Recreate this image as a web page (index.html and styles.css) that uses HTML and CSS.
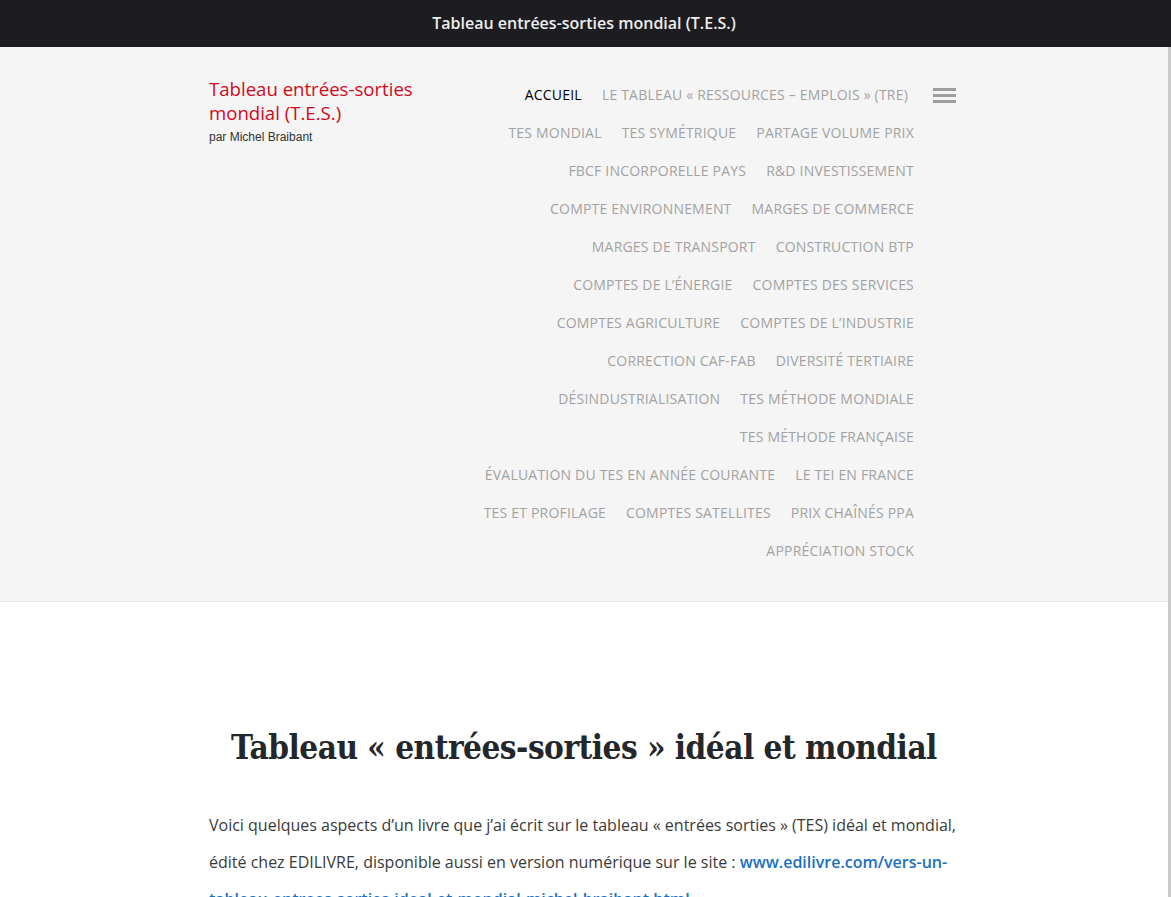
FILE: index.html
```html
<!DOCTYPE html>
<html lang="fr">
<head>
<meta charset="utf-8">
<title>Tableau entrées-sorties mondial (T.E.S.)</title>
<link rel="stylesheet" href="styles.css">
</head>
<body>
<div class="topbar">Tableau entrées-sorties mondial (T.E.S.)</div>
<div class="page">
  <header class="site-header">
    <div class="header-inner">
      <div class="branding">
        <a class="site-title" href="#">Tableau entrées-sorties mondial (T.E.S.)</a>
        <p class="site-desc">par Michel Braibant</p>
      </div>
      <nav class="main-nav">
        <ul class="menu">
          <li><a class="active" href="#">ACCUEIL</a></li>
          <li class="menu-first-end"><a href="#">LE TABLEAU « RESSOURCES – EMPLOIS » (TRE)</a></li>
          <li><a href="#">TES MONDIAL</a></li>
          <li><a href="#">TES SYMÉTRIQUE</a></li>
          <li><a href="#">PARTAGE VOLUME PRIX</a></li>
          <li><a href="#">FBCF INCORPORELLE PAYS</a></li>
          <li><a href="#">R&amp;D INVESTISSEMENT</a></li>
          <li><a href="#">COMPTE ENVIRONNEMENT</a></li>
          <li><a href="#">MARGES DE COMMERCE</a></li>
          <li><a href="#">MARGES DE TRANSPORT</a></li>
          <li><a href="#">CONSTRUCTION BTP</a></li>
          <li><a href="#">COMPTES DE L’ÉNERGIE</a></li>
          <li><a href="#">COMPTES DES SERVICES</a></li>
          <li><a href="#">COMPTES AGRICULTURE</a></li>
          <li><a href="#">COMPTES DE L’INDUSTRIE</a></li>
          <li><a href="#">CORRECTION CAF-FAB</a></li>
          <li><a href="#">DIVERSITÉ TERTIAIRE</a></li>
          <li><a href="#">DÉSINDUSTRIALISATION</a></li>
          <li><a href="#">TES MÉTHODE MONDIALE</a></li>
          <li><a href="#">TES MÉTHODE FRANÇAISE</a></li>
          <li><a href="#">ÉVALUATION DU TES EN ANNÉE COURANTE</a></li>
          <li><a href="#">LE TEI EN FRANCE</a></li>
          <li><a href="#">TES ET PROFILAGE</a></li>
          <li><a href="#">COMPTES SATELLITES</a></li>
          <li><a href="#">PRIX CHAÎNÉS PPA</a></li>
          <li><a href="#">APPRÉCIATION STOCK</a></li>
        </ul>
      </nav>
      <button class="menu-toggle" aria-label="Menu">
        <svg width="23" height="16" viewBox="0 0 23 16"><rect x="0" y="0" width="23" height="3" fill="#9e9e9e"/><rect x="0" y="6" width="23" height="3" fill="#9e9e9e"/><rect x="0" y="12" width="23" height="3" fill="#9e9e9e"/></svg>
      </button>
    </div>
  </header>
  <main class="content">
    <article class="entry">
      <h1 class="entry-title">Tableau « entrées-sorties » idéal et mondial</h1>
      <p>Voici quelques aspects d’un livre que j’ai écrit sur le tableau « entrées sorties » (TES) idéal et mondial, édité chez EDILIVRE, disponible aussi en version numérique sur le site : <a href="#">www.edilivre.com/vers-un-tableau-entrees-sorties-ideal-et-mondial-michel-braibant.html</a></p>
    </article>
  </main>
</div>
</body>
</html>
```
FILE: styles.css
```css
html, body {
  margin: 0;
  padding: 0;
  background: #ffffff;
}
body {
  font-family: "Open Sans", "Liberation Sans", sans-serif;
  color: #333;
}
.topbar {
  height: 47px;
  background: #1d1d21;
  color: #ededed;
  font-family: "Open Sans", sans-serif;
  font-weight: 600;
  font-size: 16px;
  line-height: 47px;
  text-align: center;
  padding-right: 3px;
}
.page {
  border-right: 3px solid #c9c9c9;
  min-height: 850px;
}
.site-header {
  background: #f5f5f5;
  border-bottom: 1px solid #e6e6e6;
  padding: 29px 0 31px;
}
.header-inner {
  width: 750px;
  margin: 0 auto;
  display: flex;
  align-items: flex-start;
}
.branding {
  flex: 1;
  padding-top: 1px;
}
.site-title {
  display: block;
  color: #d3071c;
  text-decoration: none;
  font-family: "Open Sans", sans-serif;
  font-size: 18.6px;
  line-height: 24px;
  width: 230px;
}
.site-desc {
  margin: 5px 0 0;
  font-family: "Liberation Sans", Arial, sans-serif;
  font-size: 12px;
  color: #333;
}
.main-nav {
  width: 472px;
}
.menu {
  list-style: none;
  margin: 0;
  padding: 0;
  display: flex;
  flex-wrap: wrap;
  justify-content: flex-end;
}
.menu a {
  display: block;
  padding: 0 10px;
  line-height: 38px;
  font-size: 14px;
  font-weight: 500;
  letter-spacing: 0.2px;
  color: #a2a2a2;
  text-decoration: none;
  white-space: nowrap;
}
.menu a.active {
  color: #000;
}
.menu .menu-first-end {
  margin-right: 6px;
}
.menu-toggle {
  width: 35px;
  height: 38px;
  padding: 0 0 0 9px;
  margin: 0;
  border: 0;
  background: none;
  display: flex;
  align-items: center;
}
.menu-toggle svg {
  display: block;
  margin-top: 2px;
}
.content {
  padding: 122px 0 40px;
}
.entry {
  width: 750px;
  margin: 0 auto;
}
.entry-title {
  margin: 0 0 35px;
  text-align: center;
  font-family: "DejaVu Serif Condensed", "DejaVu Serif", serif;
  font-stretch: condensed;
  font-weight: bold;
  font-size: 33px;
  line-height: 48px;
  color: #23272b;
  letter-spacing: -0.5px;
  white-space: nowrap;
}
.entry p {
  margin: 0;
  font-size: 16px;
  line-height: 37px;
  color: #3a3a3a;
}
.entry p a {
  color: #1a6fc0;
  font-weight: 600;
  text-decoration: none;
}
```
